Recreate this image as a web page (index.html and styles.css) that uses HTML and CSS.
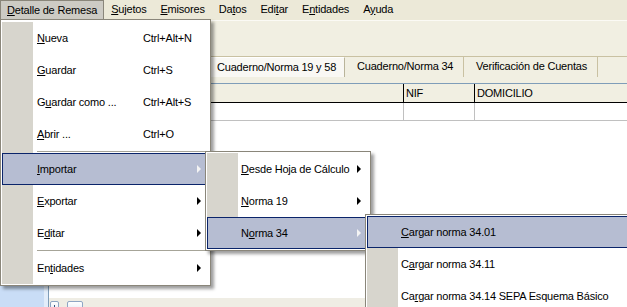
FILE: index.html
```html
<!DOCTYPE html>
<html lang="es">
<head>
  <meta charset="UTF-8" />
  <title>Detalle de Remesa</title>
  <link rel="stylesheet" href="styles.css">
</head>
<body>
  <!-- Menu bar -->
  <div class="menubar">
    <span class="menubar-item open"><u>D</u>etalle de Remesa</span>
    <span class="menubar-item"><u>S</u>ujetos</span>
    <span class="menubar-item"><u>E</u>misores</span>
    <span class="menubar-item">Da<u>t</u>os</span>
    <span class="menubar-item">Edi<u>t</u>ar</span>
    <span class="menubar-item">E<u>n</u>tidades</span>
    <span class="menubar-item">A<u>y</u>uda</span>
  </div>

  <div class="main">
    <div class="sidebar"></div>
    <div class="panel">
      <div class="toolbar"></div>
      <div class="tabs">
        <div class="tab active">Cuaderno/Norma 19 y 58</div>
        <div class="tab tab-34">Cuaderno/Norma 34</div>
        <div class="tab tab-cuentas">Verificación de Cuentas</div>
      </div>
      <div class="tabs-gap"></div>
      <div class="grid">
        <div class="grid-head">
          <div class="cell cell-name"></div>
          <div class="cell cell-nif">NIF</div>
          <div class="cell cell-dom">DOMICILIO</div>
        </div>
        <div class="grid-row">
          <div class="cell cell-name"></div>
          <div class="cell cell-nif"></div>
          <div class="cell cell-dom"></div>
        </div>
        <div class="grid-body"></div>
      </div>
      <div class="bottom-bar">
        <span class="mini-btn plus">
          <svg width="7" height="7" viewBox="0 0 7 7"><path d="M3.5 1v6M0.5 4h6" stroke="#31507A" stroke-width="1"/></svg>
        </span>
        <span class="mini-btn dots">
          <svg width="12" height="7" viewBox="0 0 12 7"><path d="M2 5h1M5.5 5h1M9 5h1" stroke="#31507A" stroke-width="1"/></svg>
        </span>
      </div>
    </div>
  </div>

  <!-- Open menus -->
  <div class="menu menu-main">
    <div class="item"><span class="gutter"></span><span class="label"><u>N</u>ueva</span><span class="keys">Ctrl+Alt+N</span></div>
    <div class="item"><span class="gutter"></span><span class="label"><u>G</u>uardar</span><span class="keys">Ctrl+S</span></div>
    <div class="item"><span class="gutter"></span><span class="label">G<u>u</u>ardar como ...</span><span class="keys">Ctrl+Alt+S</span></div>
    <div class="item"><span class="gutter"></span><span class="label"><u>A</u>brir ...</span><span class="keys">Ctrl+O</span></div>
    <div class="sep"><span class="gutter"></span><span class="line"></span></div>
    <div class="item hot"><span class="gutter"></span><span class="label"><u>I</u>mportar</span><span class="arrow"></span></div>
    <div class="item"><span class="gutter"></span><span class="label"><u>E</u>xportar</span><span class="arrow"></span></div>
    <div class="item"><span class="gutter"></span><span class="label">E<u>d</u>itar</span><span class="arrow"></span></div>
    <div class="sep"><span class="gutter"></span><span class="line"></span></div>
    <div class="item"><span class="gutter"></span><span class="label">En<u>t</u>idades</span><span class="arrow"></span></div>
  </div>

  <div class="menu menu-import">
    <div class="item"><span class="gutter"></span><span class="label"><u>D</u>esde Hoja de Cálculo</span><span class="arrow"></span></div>
    <div class="item"><span class="gutter"></span><span class="label"><u>N</u>orma 19</span><span class="arrow"></span></div>
    <div class="item hot"><span class="gutter"></span><span class="label">N<u>o</u>rma 34</span><span class="arrow"></span></div>
  </div>

  <div class="menu menu-norma34">
    <div class="item hot"><span class="gutter"></span><span class="label"><u>C</u>argar norma 34.01</span></div>
    <div class="item"><span class="gutter"></span><span class="label">C<u>a</u>rgar norma 34.11</span></div>
    <div class="item"><span class="gutter"></span><span class="label">Ca<u>r</u>gar norma 34.14 SEPA Esquema Básico</span></div>
  </div>
</body>
</html>
```

FILE: styles.css
```css
* { margin: 0; padding: 0; box-sizing: border-box; }

html, body {
  width: 627px;
  height: 307px;
  overflow: hidden;
}

body {
  position: relative;
  display: flex;
  flex-direction: column;
  font-family: "Liberation Sans", Arial, sans-serif;
  font-size: 11px;
  letter-spacing: -0.2px;
  color: #000;
  background: #ECE9D8;
}

u { text-decoration: underline; text-underline-offset: 1px; }

/* menu bar */
.menubar {
  display: flex;
  height: 21px;
  background: #ECE9D8;
  border-bottom: 1px solid #fbfaf5;
}

.menubar-item {
  padding: 0 7px;
  line-height: 19px;
  height: 20px;
  white-space: nowrap;
}

.menubar-item.open {
  background: #CDCBC4;
  border: 1px solid #8A867A;
  border-bottom: none;
  padding: 0 6px;
  line-height: 18px;
}

/* app body */
.main {
  flex: 1;
  display: flex;
  min-height: 0;
}

.sidebar {
  width: 49px;
  background: #C9DDF6;
  border-right: 1px solid #7F9DB9;
  box-shadow: inset -4px 0 0 #E2EDFA;
}

.panel {
  flex: 1;
  display: flex;
  flex-direction: column;
  background: #F1EFE2;
  min-width: 0;
}

.toolbar { height: 35px; }

.tabs {
  display: flex;
  height: 21px;
  padding-left: 155px;
  border-top: 1px solid #C9C1A2;
}

.tab {
  height: 20px;
  line-height: 19px;
  padding-left: 12px;
  border-right: 1px solid #C9C1A2;
  white-space: nowrap;
  overflow: hidden;
}

.tab.active {
  width: 141px;
  padding-left: 13px;
  background: #F9F8F4;
  border-top: 1px solid #fff;
  border-right: 1px solid #B9B49A;
  line-height: 18px;
}

.tab-34 { width: 119px; }
.tab-cuentas { width: 134px; }

.tabs-gap { height: 6px; }

/* grid */
.grid {
  flex: 1;
  display: flex;
  flex-direction: column;
  background: #fff;
  border-top: 1px solid #7F9DB9;
}

.grid-head, .grid-row {
  display: flex;
  flex-shrink: 0;
}

.grid-head {
  height: 19px;
  background: #F1EFE2;
  border-bottom: 1px solid #000;
}

.grid-row {
  height: 18px;
  border-bottom: 1px solid #C0C0C0;
}

.cell {
  line-height: 18px;
  padding-left: 2px;
  white-space: nowrap;
}

.cell-name { width: 354px; }
.cell-nif { width: 71px; border-left: 1px solid #000; }
.cell-dom { flex: 1; border-left: 1px solid #000; }

.grid-row .cell-nif, .grid-row .cell-dom { border-left-color: #C0C0C0; }

.grid-body { flex: 1; }

.bottom-bar {
  display: flex;
  gap: 8px;
  height: 9px;
  padding: 3px 0 0 1px;
  background: #EFEDE4;
  flex-shrink: 0;
}

.mini-btn {
  display: flex;
  justify-content: center;
  padding-top: 2px;
  height: 14px;
  border: 1px solid #8FA6C4;
  border-radius: 2px;
  background: linear-gradient(#fff, #D9E4F2);
}

.mini-btn.plus { width: 9px; }
.mini-btn.dots { width: 16px; }

/* popup menus */
.menu {
  position: absolute;
  background: #fff;
  border: 1px solid #8A867A;
  padding: 1px;
  box-shadow: 3px 3px 3px rgba(0, 0, 0, 0.38);
}

.menu-main { left: 0; top: 19px; width: 211px; padding-top: 2px; }
.menu-import { left: 205px; top: 151px; width: 166px; }
.menu-norma34 { left: 365px; top: 214px; width: 265px; }

.item {
  display: flex;
  align-items: center;
  height: 32px;
  white-space: nowrap;
}

.gutter {
  align-self: stretch;
  width: 31px;
  flex-shrink: 0;
  background: #D7D5CD;
}

.label { padding-left: 3px; }

.menu-main .label { width: 110px; padding-left: 4px; }

.keys { flex: 1; }

.arrow {
  margin-left: auto;
  margin-right: 8px;
  width: 0;
  height: 0;
  border-left: 4px solid #000;
  border-top: 4px solid transparent;
  border-bottom: 4px solid transparent;
}

.item.hot {
  background: #B6BDD2;
  box-shadow: inset 0 0 0 1px #0A246A;
}

.item.hot .gutter { background: transparent; }
.item.hot .arrow { border-left-color: #F4F4F4; }

.sep {
  display: flex;
  height: 3px;
}

.sep .line {
  flex: 1;
  margin: 1px 0 1px 4px;
  background: #A6A498;
}
```
